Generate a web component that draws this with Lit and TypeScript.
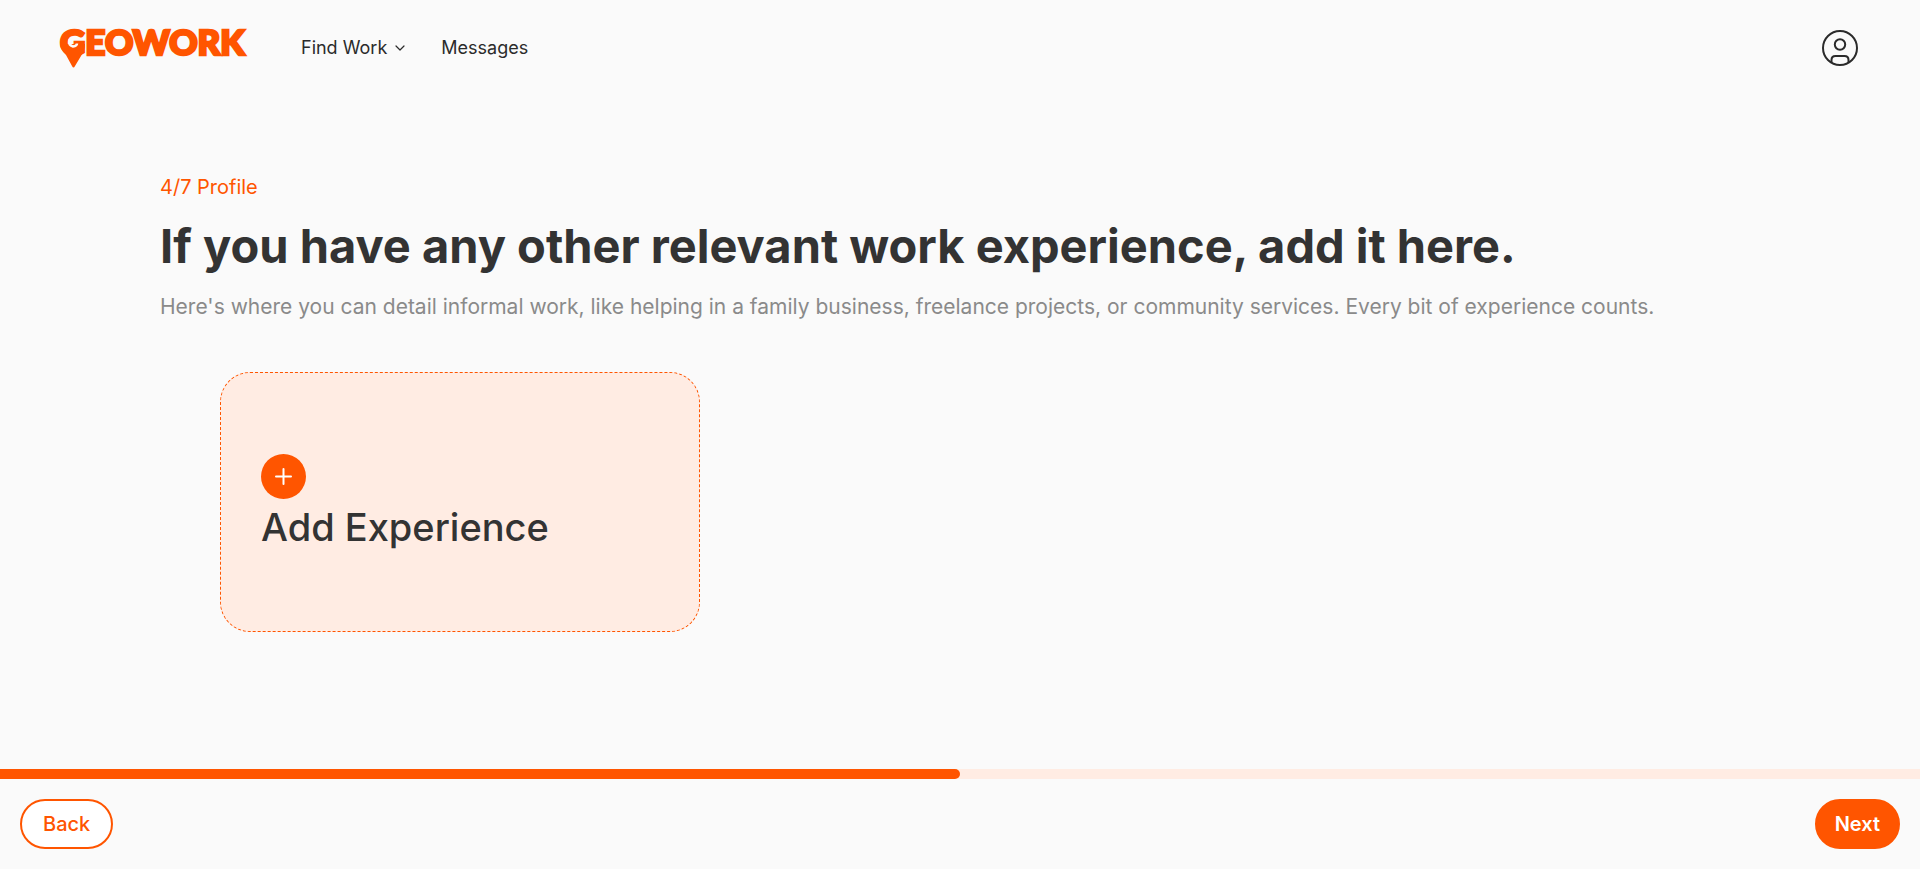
import { LitElement, html, css } from "lit";
import { customElement, property } from "lit/decorators.js";

@customElement("geo-header")
class GeoHeader extends LitElement {
  static styles = css`
    :host { display: block; }
    .bar { display: flex; align-items: center; height: 96px; padding: 0 60px; }
    .logo { display: block; }
    .logo svg { display: block; overflow: visible; }
    .wordmark { font: 900 35px Lato, sans-serif; fill: #ff5500; stroke: #ff5500; stroke-width: 2.6; }
    .nav { display: flex; align-items: center; gap: 36px; margin-left: 54px; flex: 1; }
    .link {
      display: flex; align-items: center; gap: 8px; padding: 0; border: 0; background: none;
      font: 400 18px/28px Inter, sans-serif; color: #2b2b2b; text-decoration: none; cursor: pointer;
    }
    .account { padding: 0; border: 0; background: none; cursor: pointer; display: block; }
    .account svg { display: block; }
  `;
  render() {
    return html`
      <header class="bar">
        <a class="logo" href="#" aria-label="Geowork home">
          <svg width="187" height="44" viewBox="0 0 187 44">
            <text class="wordmark" x="0" y="29">GEOWORK</text>
            <path d="M0 18 L25 18 Q25 24 21 30 L15 40 Q13.5 43 12 40 L6 29 Q0 23 0 18Z" fill="#ff5500" />
            <path d="M9.5 13.5 Q8 19 13 20.5 Q17 20 17 17.5" fill="none" stroke="#fafafa" stroke-width="2.5" />
          </svg>
        </a>
        <nav class="nav">
          <button class="link" type="button">
            Find Work
            <svg width="10" height="6" viewBox="0 0 10 6" fill="none" stroke="#2b2b2b" stroke-width="1.2" stroke-linecap="round" stroke-linejoin="round"><path d="M1 1l4 4 4-4" /></svg>
          </button>
          <a class="link" href="#messages">Messages</a>
        </nav>
        <button class="account" type="button" aria-label="Account">
          <svg width="40" height="36" viewBox="0 0 40 36" fill="none" stroke="#2b2b2b" stroke-width="2">
            <circle cx="20" cy="18" r="17" />
            <circle cx="20" cy="14.5" r="5.2" />
            <path d="M11.5 32.5V30q0-4 4-4h9q4 0 4 4v2.5" />
          </svg>
        </button>
      </header>
    `;
  }
}

@customElement("geo-footer")
class GeoFooter extends LitElement {
  @property({ type: Number }) percent = 0;
  static styles = css`
    :host { display: block; }
    .track { height: 10px; background: #ffece3; }
    .fill { height: 10px; background: #ff5500; border-radius: 0 5px 5px 0; }
    .actions { display: flex; justify-content: space-between; padding: 20px; }
    .btn {
      box-sizing: border-box; height: 50px; padding: 0 21px; border: 2px solid #ff5500; border-radius: 25px;
      font: 500 20px/30px Inter, sans-serif; cursor: pointer;
    }
    .back { background: #fff; color: #ff5500; }
    .next { padding: 0 18px; background: #ff5500; color: #fff; font-weight: 600; }
  `;
  render() {
    return html`
      <div class="track" role="progressbar" aria-label="Profile progress" aria-valuenow=${this.percent}>
        <div class="fill" style="width:${this.percent}%"></div>
      </div>
      <div class="actions">
        <button class="btn back" type="button">Back</button>
        <button class="btn next" type="button">Next</button>
      </div>
    `;
  }
}

@customElement("app-root")
class AppRoot extends LitElement {
  static styles = css`
    :host { display: flex; flex-direction: column; min-height: 100vh; background: #fafafa; color: #333; font-family: Inter, sans-serif; }
    .content { flex: 1; padding: 76px 160px 40px; }
    .step { margin: 0; font-size: 20px; line-height: 30px; color: #ff5500; }
    .title { margin: 8px 0 10px; font-size: 47px; line-height: 72px; font-weight: 700; }
    .hint { margin: 0; font-size: 21px; line-height: 30px; color: #8a8a8a; }
    .cards { display: flex; flex-wrap: wrap; gap: 40px; padding: 50px 60px 0; }
    .add {
      box-sizing: border-box; display: flex; flex-direction: column; align-items: flex-start; justify-content: center; gap: 4px;
      width: 480px; height: 260px; padding: 0 40px; border: 1px dashed #ff5500; border-radius: 30px;
      background: #ffece3; color: #333; font: 500 38px/48px Inter, sans-serif; text-align: left; cursor: pointer;
    }
    .plus { display: block; }
  `;
  render() {
    return html`
      <geo-header></geo-header>
      <main class="content">
        <p class="step">4/7 Profile</p>
        <h1 class="title">If you have any other relevant work experience, add it here.</h1>
        <p class="hint">Here's where you can detail informal work, like helping in a family business, freelance projects, or community services. Every bit of experience counts.</p>
        <div class="cards">
          <button class="add" type="button">
            <svg class="plus" width="45" height="45" viewBox="0 0 45 45">
              <circle cx="22.5" cy="22.5" r="22.5" fill="#ff5500" />
              <path d="M22.5 15v15M15 22.5h15" stroke="#fff" stroke-width="2" stroke-linecap="round" />
            </svg>
            Add Experience
          </button>
        </div>
      </main>
      <geo-footer .percent=${50}></geo-footer>
    `;
  }
}
